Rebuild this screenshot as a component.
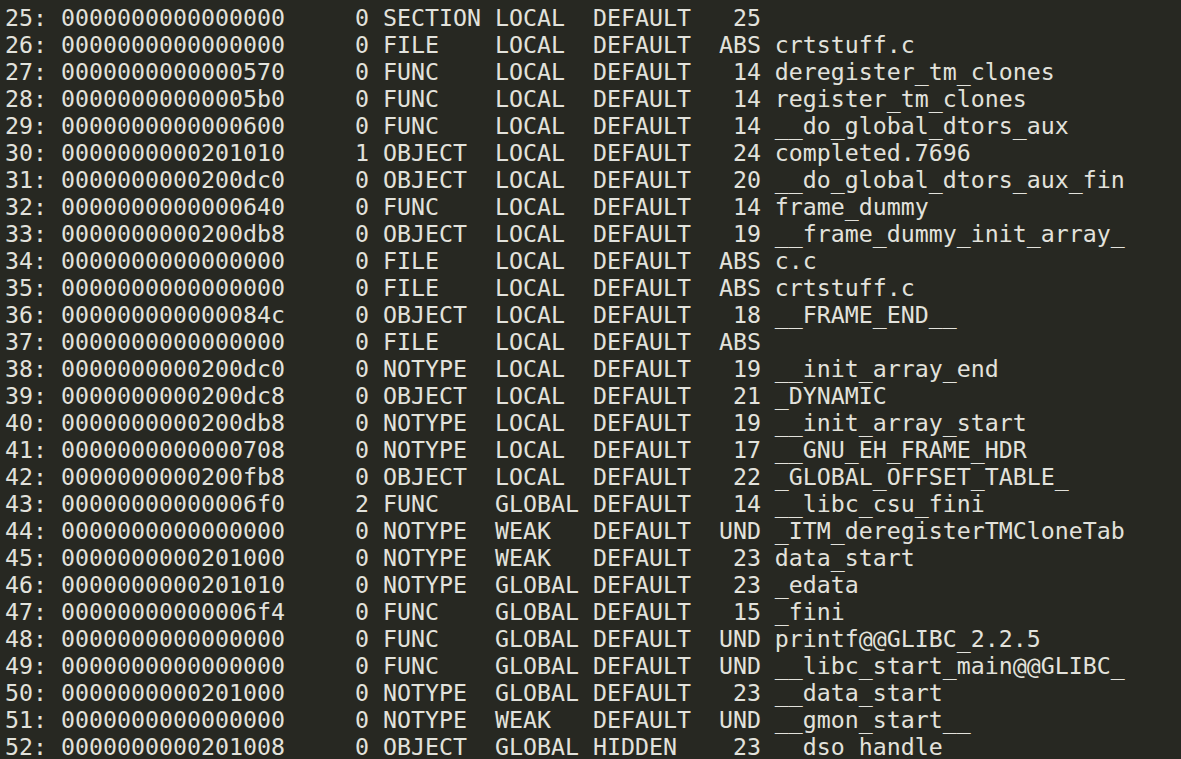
import React from 'react';

// readelf -s style symbol table rows
const symbols = [
    ['25', '0000000000000000', '0', 'SECTION', 'LOCAL', 'DEFAULT', '25', ''],
    ['26', '0000000000000000', '0', 'FILE', 'LOCAL', 'DEFAULT', 'ABS', 'crtstuff.c'],
    ['27', '0000000000000570', '0', 'FUNC', 'LOCAL', 'DEFAULT', '14', 'deregister_tm_clones'],
    ['28', '00000000000005b0', '0', 'FUNC', 'LOCAL', 'DEFAULT', '14', 'register_tm_clones'],
    ['29', '0000000000000600', '0', 'FUNC', 'LOCAL', 'DEFAULT', '14', '__do_global_dtors_aux'],
    ['30', '0000000000201010', '1', 'OBJECT', 'LOCAL', 'DEFAULT', '24', 'completed.7696'],
    ['31', '0000000000200dc0', '0', 'OBJECT', 'LOCAL', 'DEFAULT', '20', '__do_global_dtors_aux_fin'],
    ['32', '0000000000000640', '0', 'FUNC', 'LOCAL', 'DEFAULT', '14', 'frame_dummy'],
    ['33', '0000000000200db8', '0', 'OBJECT', 'LOCAL', 'DEFAULT', '19', '__frame_dummy_init_array_'],
    ['34', '0000000000000000', '0', 'FILE', 'LOCAL', 'DEFAULT', 'ABS', 'c.c'],
    ['35', '0000000000000000', '0', 'FILE', 'LOCAL', 'DEFAULT', 'ABS', 'crtstuff.c'],
    ['36', '000000000000084c', '0', 'OBJECT', 'LOCAL', 'DEFAULT', '18', '__FRAME_END__'],
    ['37', '0000000000000000', '0', 'FILE', 'LOCAL', 'DEFAULT', 'ABS', ''],
    ['38', '0000000000200dc0', '0', 'NOTYPE', 'LOCAL', 'DEFAULT', '19', '__init_array_end'],
    ['39', '0000000000200dc8', '0', 'OBJECT', 'LOCAL', 'DEFAULT', '21', '_DYNAMIC'],
    ['40', '0000000000200db8', '0', 'NOTYPE', 'LOCAL', 'DEFAULT', '19', '__init_array_start'],
    ['41', '0000000000000708', '0', 'NOTYPE', 'LOCAL', 'DEFAULT', '17', '__GNU_EH_FRAME_HDR'],
    ['42', '0000000000200fb8', '0', 'OBJECT', 'LOCAL', 'DEFAULT', '22', '_GLOBAL_OFFSET_TABLE_'],
    ['43', '00000000000006f0', '2', 'FUNC', 'GLOBAL', 'DEFAULT', '14', '__libc_csu_fini'],
    ['44', '0000000000000000', '0', 'NOTYPE', 'WEAK', 'DEFAULT', 'UND', '_ITM_deregisterTMCloneTab'],
    ['45', '0000000000201000', '0', 'NOTYPE', 'WEAK', 'DEFAULT', '23', 'data_start'],
    ['46', '0000000000201010', '0', 'NOTYPE', 'GLOBAL', 'DEFAULT', '23', '_edata'],
    ['47', '00000000000006f4', '0', 'FUNC', 'GLOBAL', 'DEFAULT', '15', '_fini'],
    ['48', '0000000000000000', '0', 'FUNC', 'GLOBAL', 'DEFAULT', 'UND', 'printf@@GLIBC_2.2.5'],
    ['49', '0000000000000000', '0', 'FUNC', 'GLOBAL', 'DEFAULT', 'UND', '__libc_start_main@@GLIBC_'],
    ['50', '0000000000201000', '0', 'NOTYPE', 'GLOBAL', 'DEFAULT', '23', '__data_start'],
    ['51', '0000000000000000', '0', 'NOTYPE', 'WEAK', 'DEFAULT', 'UND', '__gmon_start__'],
    ['52', '0000000000201008', '0', 'OBJECT', 'GLOBAL', 'HIDDEN', '23', '__dso_handle'],
];

const formatRow = (r: string[]) => {
    const [num, value, size, type, bind, vis, ndx, name] = r;
    return (
        `${num}: ${value} ${size.padStart(5)} ${type.padEnd(7)} ${bind.padEnd(6)} ${vis.padEnd(7)} ${ndx.padStart(4)} ${name}`
    );
};

export default function App() {
    return (
        <div className="w-[1181px] h-[759px] overflow-hidden bg-[#272822] text-[#e2e2dc] pl-[5px] pt-[4px] font-['DejaVu_Sans_Mono',monospace] text-[23.25px] leading-[27px]">
            {symbols.map((row) => (
                <div key={row[0]} className="whitespace-pre">
                    {formatRow(row)}
                </div>
            ))}
        </div>
    );
}
